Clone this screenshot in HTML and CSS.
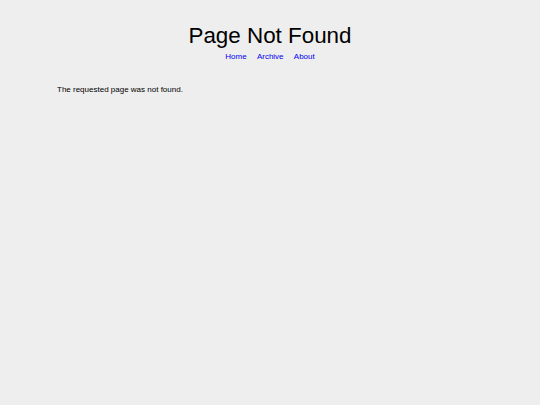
FILE: index.html
```html
<!DOCTYPE html>
<html>
<head>
<meta charset="utf-8">
<title>Page Not Found</title>
<link rel="stylesheet" href="styles.css">
</head>
<body>
<header class="site-header">
  <h1 class="site-title">Page Not Found</h1>
  <nav class="site-nav">
    <a href="#">Home</a>
    <a href="#">Archive</a>
    <a href="#">About</a>
  </nav>
</header>
<main class="content">
  <p>The requested page was not found.</p>
</main>
</body>
</html>
```
FILE: styles.css
```css
html, body {
  margin: 0;
  padding: 0;
  background: #eeeeee;
  font-family: "Liberation Sans", Arial, sans-serif;
  color: #000;
}

.site-header {
  text-align: center;
  padding-top: 22px;
}

.site-title {
  margin: 0;
  font-size: 22.4px;
  font-weight: normal;
  line-height: 28px;
}

.site-nav {
  font-size: 8px;
  line-height: 12px;
  margin-top: 1px;
}

.site-nav a {
  color: #0000ee;
  text-decoration: none;
  margin: 0 4px;
}

.content {
  padding: 0 57px;
  margin-top: 21px;
}

.content p {
  margin: 0;
  font-size: 8px;
  line-height: 12px;
}
```
